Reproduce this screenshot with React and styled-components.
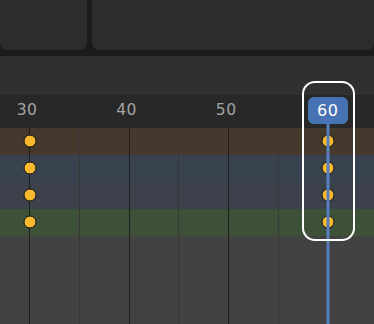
import React from 'react';
import styled, { createGlobalStyle } from 'styled-components';

const Global = createGlobalStyle`
  html, body {
    margin: 0;
    padding: 0;
    background: #424242;
  }
  * { box-sizing: border-box; }
`;

const frameX = (f) => 29 + (f - 30) * 9.96;

const Screen = styled.div`
  width: 374px;
  height: 324px;
  display: flex;
  flex-direction: column;
  overflow: hidden;
  font-family: "DejaVu Sans", "Noto Sans", sans-serif;
  background: #424242;
`;

const TopArea = styled.div`
  height: 56px;
  display: flex;
  gap: 5px;
  padding-bottom: 6px;
  background: #1b1b1b;
`;

const Panel = styled.div`
  width: ${(p) => (p.$grow ? 'auto' : p.$width + 'px')};
  flex: ${(p) => (p.$grow ? 1 : 'none')};
  background: #2c2c2c;
  border-radius: 0 0 7px 7px;
`;

const Header = styled.div`
  height: 39px;
  background: #303030;
`;

const Timeline = styled.div`
  position: relative;
  flex: 1;
  display: flex;
  flex-direction: column;
`;

const Ruler = styled.div`
  height: 33px;
  background: #282828;
  position: relative;
`;

const Label = styled.span`
  position: absolute;
  top: 6px;
  transform: translateX(-50%);
  font-size: 15.5px;
  color: #a3a3a3;
  letter-spacing: 0.5px;
`;

const Channel = styled.div`
  height: 27px;
  background: ${(p) => p.$color};
`;

const Empty = styled.div`
  flex: 1;
  background: #424242;
`;

const GridLine = styled.div`
  position: absolute;
  top: 33px;
  bottom: 0;
  width: 1px;
  background: ${(p) => (p.$major ? '#1f1f1f' : '#383838')};
`;

const Key = styled.div`
  position: absolute;
  width: ${(p) => p.$size}px;
  height: ${(p) => p.$size}px;
  border-radius: 50%;
  background: #f8b92f;
  border: 1.5px solid #111;
  transform: translate(-50%, -50%);
`;

const Playhead = styled.div`
  position: absolute;
  top: 29px;
  bottom: 0;
  width: 3px;
  background: #5680c2;
  transform: translateX(-50%);
`;

const FrameBadge = styled.div`
  position: absolute;
  top: 2px;
  width: 40px;
  height: 27px;
  border-radius: 6px;
  background: #4772b3;
  color: #ffffff;
  font-size: 16px;
  display: flex;
  align-items: center;
  justify-content: center;
  transform: translateX(-50%);
  letter-spacing: 0.5px;
`;

const Highlight = styled.div`
  position: absolute;
  left: 302px;
  top: -14px;
  width: 53px;
  height: 160px;
  border: 2px solid #ffffff;
  border-radius: 13px;
`;

const channels = ['#45392d', '#39424f', '#3c414b', '#3d5138'];
const majors = [30, 40, 50];
const minors = [25, 35, 45, 55, 65];
const current = 60;

export default function App() {
  return (
    <Screen>
      <Global />
      <TopArea>
        <Panel $width={87} />
        <Panel $grow />
      </TopArea>
      <Header />
      <Timeline>
        <Ruler>
          {majors.map((f) => (
            <Label key={f} style={{ left: frameX(f) - 2 }}>{f}</Label>
          ))}
        </Ruler>
        {channels.map((c) => (
          <Channel key={c} $color={c} />
        ))}
        <Empty />
        {minors.map((f) => (
          <GridLine key={'m' + f} style={{ left: Math.round(frameX(f)) }} />
        ))}
        {majors.map((f) => (
          <GridLine key={'M' + f} $major style={{ left: Math.round(frameX(f)) }} />
        ))}
        {channels.map((c, i) => (
          <Key key={'a' + i} $size={13} style={{ left: frameX(30) + 0.5, top: 46 + i * 27 }} />
        ))}
        {channels.map((c, i) => (
          <Key key={'b' + i} $size={13} style={{ left: frameX(current) + 0.5, top: 46 + i * 27 }} />
        ))}
        <Playhead style={{ left: frameX(current) + 0.5 }} />
        <FrameBadge style={{ left: frameX(current) }}>{current}</FrameBadge>
        <Highlight />
      </Timeline>
    </Screen>
  );
}
